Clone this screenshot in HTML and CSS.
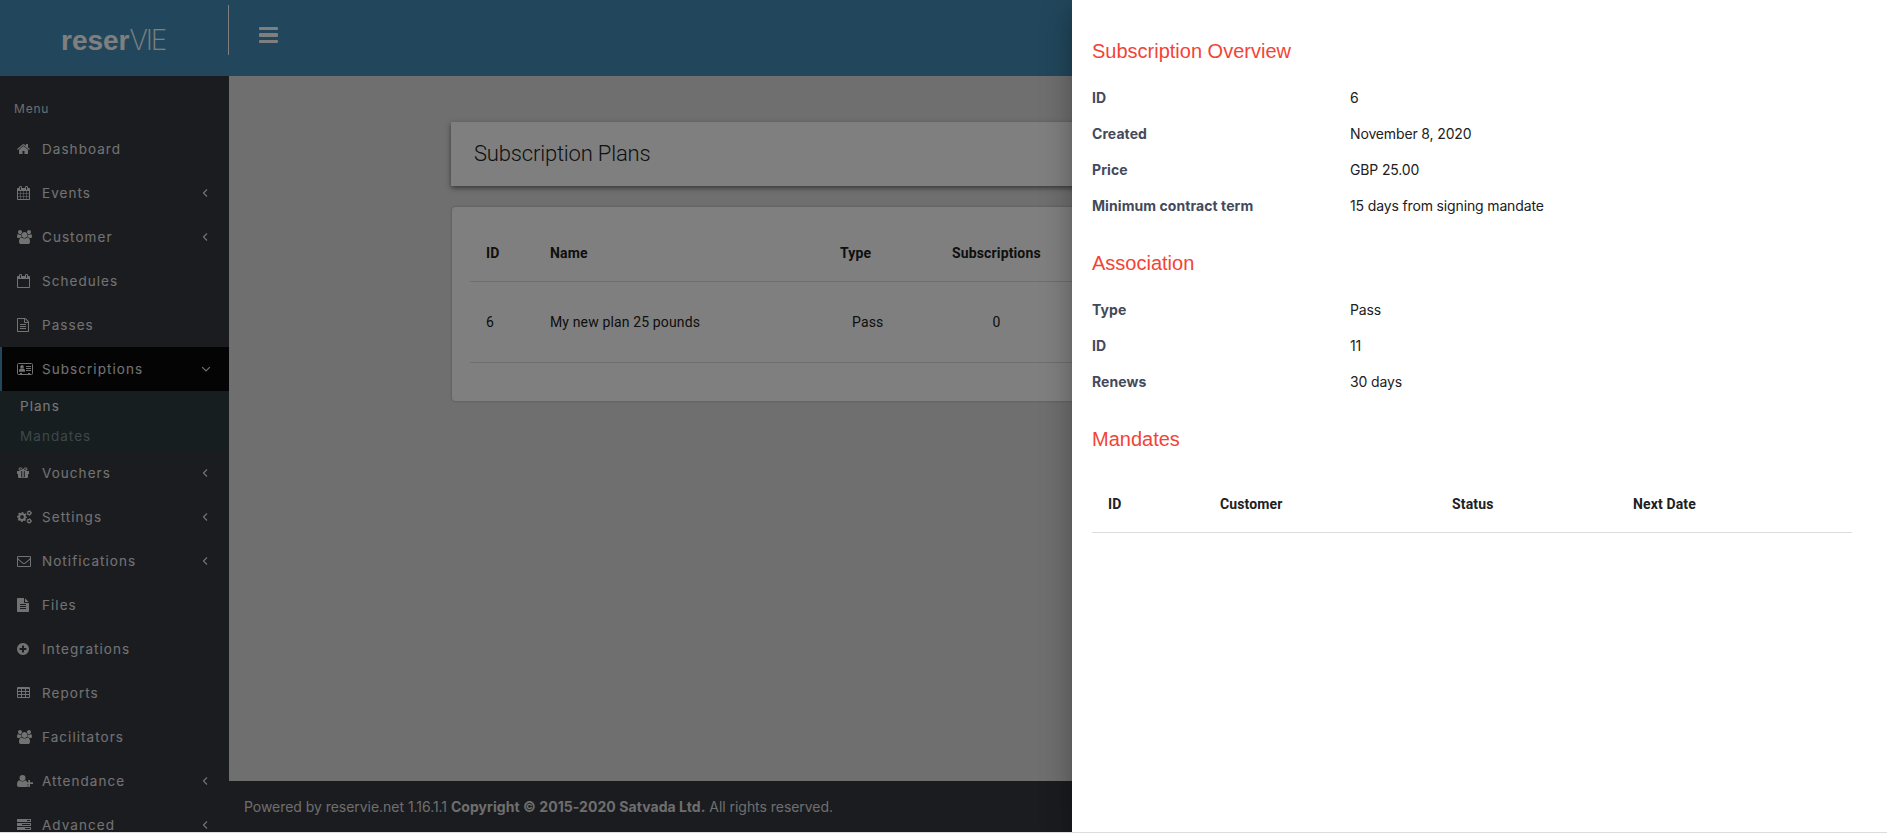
FILE: index.html
```
<!DOCTYPE html>
<html lang="en">
<head>
    <meta charset="UTF-8">
    <meta name="viewport" content="width=device-width, initial-scale=1.0">
    <title>reserVIE - Subscription Plans</title>
    <link rel="stylesheet" href="styles.css">
</head>
<body>
    <!-- icons used more than once -->
    <svg class="sprite">
        <symbol id="users" viewBox="64 0 1920 1792"><path d="M657 896q-162 5-265 128h-134q-82 0-138-40.5t-56-118.5q0-353 124-353 6 0 43.5 21t97.5 42.5 119 21.5q67 0 133-23-5 37-5 66 0 139 81 256zm1071 637q0 120-73 189.5t-194 69.5h-874q-121 0-194-69.5t-73-189.5q0-53 3.5-103.5t14-109 26.5-108.5 43-97.5 62-81 85.5-53.5 111.5-20q10 0 43 21.5t73 48 107 48 135 21.5 135-21.5 107-48 73-48 43-21.5q61 0 111.5 20t85.5 53.5 62 81 43 97.5 26.5 108.5 14 109 3.5 103.5zm-1024-1277q0 106-75 181t-181 75-181-75-75-181 75-181 181-75 181 75 75 181zm704 384q0 159-112.5 271.5t-271.5 112.5-271.5-112.5-112.5-271.5 112.5-271.5 271.5-112.5 271.5 112.5 112.5 271.5zm576 225q0 78-56 118.5t-138 40.5h-134q-103-123-265-128 81-117 81-256 0-29-5-66 66 23 133 23 59 0 119-21.5t97.5-42.5 43.5-21q124 0 124 353zm-128-609q0 106-75 181t-181 75-181-75-75-181 75-181 181-75 181 75 75 181z"/></symbol>
        <symbol id="left" viewBox="0 0 10 10"><path d="M6 1.5 2.5 5 6 8.5" fill="none" stroke="currentColor" stroke-width="1.2"/></symbol>
    </svg>

    <div class="app">
        <header class="header">
            <div class="logo"><b>reser</b><span>VIE</span></div>
            <div class="toggle"><i></i><i></i><i></i></div>
        </header>

        <div class="wrapper">
            <nav class="sidebar">
                <div class="menu-title">Menu</div>
                <a class="item">
                    <svg class="icon" width="13" height="14" viewBox="64 0 1664 1792"><path d="M1472 992v480q0 26-19 45t-45 19h-384v-384h-256v384h-384q-26 0-45-19t-19-45v-480q0-1 .5-3t.5-3l575-474 575 474q1 2 1 6zm223-69l-62 74q-8 9-21 11h-3q-13 0-21-7l-692-577-692 577q-12 8-24 7-13-2-21-11l-62-74q-8-10-7-23.5t11-21.5l719-599q32-26 76-26t76 26l244 204v-195q0-14 9-23t23-9h192q14 0 23 9t9 23v408l219 182q10 8 11 21.5t-7 23.5z"/></svg>
                    <span>Dashboard</span>
                </a>
                <a class="item">
                    <svg class="icon" width="13" height="14" viewBox="64 0 1664 1792"><path d="M192 1664h288v-288h-288v288zm352 0h320v-288h-320v288zm-352-352h288v-320h-288v320zm352 0h320v-320h-320v320zm-352-384h288v-288h-288v288zm736 736h320v-288h-320v288zm-384-736h320v-288h-320v288zm768 736h288v-288h-288v288zm-384-352h320v-320h-320v320zm-352-864v-288q0-13-9.5-22.5t-22.5-9.5h-64q-13 0-22.5 9.5t-9.5 22.5v288q0 13 9.5 22.5t22.5 9.5h64q13 0 22.5-9.5t9.5-22.5zm736 864h288v-320h-288v320zm-384-384h320v-288h-320v288zm384 0h288v-288h-288v288zm32-480v-288q0-13-9.5-22.5t-22.5-9.5h-64q-13 0-22.5 9.5t-9.5 22.5v288q0 13 9.5 22.5t22.5 9.5h64q13 0 22.5-9.5t9.5-22.5zm384-64v1280q0 52-38 90t-90 38h-1408q-52 0-90-38t-38-90v-1280q0-52 38-90t90-38h128v-96q0-66 47-113t113-47h64q66 0 113 47t47 113v96h384v-96q0-66 47-113t113-47h64q66 0 113 47t47 113v96h128q52 0 90 38t38 90z"/></svg>
                    <span>Events</span>
                    <svg class="arrow"><use href="#left"/></svg>
                </a>
                <a class="item">
                    <svg class="icon" width="15" height="14"><use href="#users"/></svg>
                    <span>Customer</span>
                    <svg class="arrow"><use href="#left"/></svg>
                </a>
                <a class="item">
                    <svg class="icon" width="13" height="14" viewBox="64 0 1664 1792"><path d="M192 1664h1408v-1024h-1408v1024zm384-1216v-288q0-14-9-23t-23-9h-64q-14 0-23 9t-9 23v288q0 14 9 23t23 9h64q14 0 23-9t9-23zm768 0v-288q0-14-9-23t-23-9h-64q-14 0-23 9t-9 23v288q0 14 9 23t23 9h64q14 0 23-9t9-23zm384-64v1280q0 52-38 90t-90 38h-1408q-52 0-90-38t-38-90v-1280q0-52 38-90t90-38h128v-96q0-66 47-113t113-47h64q66 0 113 47t47 113v96h384v-96q0-66 47-113t113-47h64q66 0 113 47t47 113v96h128q52 0 90 38t38 90z"/></svg>
                    <span>Schedules</span>
                </a>
                <a class="item">
                    <svg class="icon" width="12" height="14" viewBox="128 0 1536 1792"><path d="M1596 380q28 28 48 76t20 88v1152q0 40-28 68t-68 28h-1344q-40 0-68-28t-28-68v-1600q0-40 28-68t68-28h896q40 0 88 20t76 48zm-444-244v376h376q-10-29-22-41l-313-313q-12-12-41-22zm384 1528v-1024h-416q-40 0-68-28t-28-68v-416h-768v1536h1280zm-1024-864q0-14 9-23t23-9h704q14 0 23 9t9 23v64q0 14-9 23t-23 9h-704q-14 0-23-9t-9-23v-64zm736 224q14 0 23 9t9 23v64q0 14-9 23t-23 9h-704q-14 0-23-9t-9-23v-64q0-14 9-23t23-9h704zm0 256q14 0 23 9t9 23v64q0 14-9 23t-23 9h-704q-14 0-23-9t-9-23v-64q0-14 9-23t23-9h704z"/></svg>
                    <span>Passes</span>
                </a>
                <a class="item active">
                    <svg class="icon" width="16" height="12" viewBox="0 0 16 12">
                        <rect x=".5" y=".5" width="15" height="11" rx="1" fill="none" stroke="currentColor"/>
                        <circle cx="5" cy="3.9" r="1.8"/>
                        <path d="M2 8.8V7.6Q2 5.6 3.6 5.4Q5 6.4 6.4 5.4Q8 5.6 8 7.6V8.8zM9 3h5v1H9zM9 5h5v1H9zM9 7h5v1H9zM3 10h2v1H3zM11 10h2v1h-2z"/>
                    </svg>
                    <span>Subscriptions</span>
                    <svg class="arrow down" viewBox="0 0 10 10"><path d="M1.2 3.2 5 7 8.8 3.2" fill="none" stroke="currentColor" stroke-width="1.2"/></svg>
                </a>
                <div class="submenu">
                    <a class="current">Plans</a>
                    <a>Mandates</a>
                </div>
                <a class="item">
                    <svg class="icon" width="12" height="12" viewBox="0 0 12 12">
                        <path d="M0 4h4.2v3H0zM7.8 4H12v3H7.8zM1 7h3.2v4H2q-1 0-1-1zM7.800 7H11v3q0 1-1 1H7.800zM5.200 4h1.600v6H5.200zM4 10.200h4v.8H4z"/>
                        <path d="M6 3.600Q4.600.7 3.400.8 2 1 2.100 2.200 2.300 3.600 6 3.600 9.700 3.600 9.900 2.200 10 1 8.600.8 7.400.7 6 3.600z" fill="none" stroke="currentColor" stroke-width="1.1"/>
                    </svg>
                    <span>Vouchers</span>
                    <svg class="arrow"><use href="#left"/></svg>
                </a>
                <a class="item">
                    <svg class="icon" width="15" height="14" viewBox="0 0 15 14">
                        <g fill="none" stroke="currentColor">
                            <circle cx="5" cy="7" r="2.9" stroke-width="2"/>
                            <circle cx="5" cy="7" r="4.3" stroke-width="1.4" stroke-dasharray="1.7 1.677" stroke-dashoffset=".85"/>
                            <circle cx="12.2" cy="3" r="1.6" stroke-width="1.2"/>
                            <circle cx="12.2" cy="3" r="2.3" stroke-width=".8" stroke-dasharray="1.2 1.209"/>
                            <circle cx="12.2" cy="11" r="1.6" stroke-width="1.2"/>
                            <circle cx="12.2" cy="11" r="2.3" stroke-width=".8" stroke-dasharray="1.2 1.209"/>
                        </g>
                    </svg>
                    <span>Settings</span>
                    <svg class="arrow"><use href="#left"/></svg>
                </a>
                <a class="item">
                    <svg class="icon" width="14" height="14" viewBox="0 0 1792 1792"><path d="M1664 1504v-768q-32 36-69 66-268 206-426 338-51 43-83 67t-86.5 48.5-102.5 24.5h-2q-48 0-102.5-24.5t-86.5-48.5-83-67q-158-132-426-338-37-30-69-66v768q0 13 9.5 22.5t22.5 9.5h1472q13 0 22.5-9.5t9.5-22.5zm0-1051v-24.5l-.5-13-3-12.5-5.5-9-9-7.5-14-2.5h-1472q-13 0-22.5 9.5t-9.5 22.5q0 168 147 284 193 152 401 317 6 5 35 29.5t46 37.5 44.5 31.5 50.5 27.5 43 9h2q20 0 43-9t50.5-27.5 44.5-31.5 46-37.5 35-29.5q208-165 401-317 54-43 100.5-115.5t46.5-131.5zm128-37v1088q0 66-47 113t-113 47h-1472q-66 0-113-47t-47-113v-1088q0-66 47-113t113-47h1472q66 0 113 47t47 113z"/></svg>
                    <span>Notifications</span>
                    <svg class="arrow"><use href="#left"/></svg>
                </a>
                <a class="item">
                    <svg class="icon" width="12" height="14" viewBox="128 0 1536 1792"><path d="M1596 476q14 14 28 36h-472v-472q22 14 36 28zm-476 164h544v1056q0 40-28 68t-68 28h-1344q-40 0-68-28t-28-68v-1600q0-40 28-68t68-28h800v544q0 40 28 68t68 28zm160 736v-64q0-14-9-23t-23-9h-704q-14 0-23 9t-9 23v64q0 14 9 23t23 9h704q14 0 23-9t9-23zm0-256v-64q0-14-9-23t-23-9h-704q-14 0-23 9t-9 23v64q0 14 9 23t23 9h704q14 0 23-9t9-23zm0-256v-64q0-14-9-23t-23-9h-704q-14 0-23 9t-9 23v64q0 14 9 23t23 9h704q14 0 23-9t9-23z"/></svg>
                    <span>Files</span>
                </a>
                <a class="item">
                    <svg class="icon" width="12" height="14" viewBox="128 0 1536 1792"><path d="M1344 960v-128q0-26-19-45t-45-19h-256v-256q0-26-19-45t-45-19h-128q-26 0-45 19t-19 45v256h-256q-26 0-45 19t-19 45v128q0 26 19 45t45 19h256v256q0 26 19 45t45 19h128q26 0 45-19t19-45v-256h256q26 0 45-19t19-45zm320-64q0 209-103 385.5t-279.5 279.5-385.5 103-385.5-103-279.5-279.5-103-385.5 103-385.5 279.5-279.5 385.5-103 385.5 103 279.5 279.5 103 385.5z"/></svg>
                    <span>Integrations</span>
                </a>
                <a class="item">
                    <svg class="icon" width="13" height="12" viewBox="0 0 13 12"><path fill-rule="evenodd" d="M1 0h11q1 0 1 1v9q0 1-1 1H1q-1 0-1-1V1q0-1 1-1zM1 2v2h3V2zM5 2v2h3V2zM9 2v2h3V2zM1 5v2h3V5zM5 5v2h3V5zM9 5v2h3V5zM1 8v2h3V8zM5 8v2h3V8zM9 8v2h3V8z"/></svg>
                    <span>Reports</span>
                </a>
                <a class="item">
                    <svg class="icon" width="15" height="14"><use href="#users"/></svg>
                    <span>Facilitators</span>
                </a>
                <a class="item">
                    <svg class="icon" width="16" height="12" viewBox="0 0 16 12">
                        <circle cx="5.5" cy="3" r="3"/>
                        <path d="M2.5 5.2Q5.5 8 8.5 5.2q.8.2 1.200 1.300H10v3h1v1.300q-.3 1.200-1.300 1.200H2Q0 12 0 10 0 5.500 2.500 5.200zM11.200 5h1.800v2.200h3v1.800h-3v3h-1.800V9H9V7.200h2.200z"/>
                    </svg>
                    <span>Attendance</span>
                    <svg class="arrow"><use href="#left"/></svg>
                </a>
                <a class="item">
                    <svg class="icon" width="14" height="12" viewBox="0 0 14 12"><path fill-rule="evenodd" d="M0 0h14v3H0zM10 1v1h3V1zM0 4h14v3H0zM5 5v1h8V5zM0 8h14v3H0zM8 9v1h5V9z"/></svg>
                    <span>Advanced</span>
                    <svg class="arrow"><use href="#left"/></svg>
                </a>
            </nav>

            <div class="main">
                <main class="content">
                    <h1 class="page-title">Subscription Plans</h1>
                    <div class="card">
                        <div class="row head">
                            <span>ID</span>
                            <span>Name</span>
                            <span>Type</span>
                            <span>Subscriptions</span>
                        </div>
                        <div class="row">
                            <span>6</span>
                            <span>My new plan 25 pounds</span>
                            <span class="type">Pass</span>
                            <span class="count">0</span>
                        </div>
                    </div>
                </main>
                <footer class="footer">Powered by reservie.net 1.16.1.1 <b>Copyright © 2015-2020 Satvada Ltd.</b> All rights reserved.</footer>
            </div>
        </div>

        <div class="overlay"></div>
        <aside class="drawer">
            <h2>Subscription Overview</h2>
            <dl>
                <dt>ID</dt><dd>6</dd>
                <dt>Created</dt><dd>November 8, 2020</dd>
                <dt>Price</dt><dd>GBP 25.00</dd>
                <dt>Minimum contract term</dt><dd>15 days from signing mandate</dd>
            </dl>
            <h2>Association</h2>
            <dl>
                <dt>Type</dt><dd>Pass</dd>
                <dt>ID</dt><dd>11</dd>
                <dt>Renews</dt><dd>30 days</dd>
            </dl>
            <h2>Mandates</h2>
            <div class="mandates">
                <span>ID</span>
                <span>Customer</span>
                <span>Status</span>
                <span>Next Date</span>
            </div>
        </aside>
    </div>
</body>
</html>
```
FILE: styles.css
```
* {
    box-sizing: border-box;
}
body {
    margin: 0;
    background-color: #dcdcdc;
    font-family: Inter, sans-serif;
    font-size: 14px;
    overflow: hidden;
}
.sprite {
    display: none;
}
.app {
    position: relative;
    height: 832px;
    overflow: hidden;
}

/* header */
.header {
    display: flex;
    height: 76px;
    background-color: #448fb9;
    color: #fff;
}
.logo {
    width: 229px;
    height: 50px;
    margin-top: 5px;
    padding: 17px 0 0 61px;
    border-right: 1px solid #fff;
    font-family: "Liberation Sans", sans-serif;
    font-size: 28px;
    line-height: 36px;
    white-space: nowrap;
}
.logo span {
    font-family: Inter, sans-serif;
    font-weight: 200;
    letter-spacing: -2.2px;
}
.toggle {
    display: flex;
    flex-direction: column;
    gap: 3px;
    width: 19px;
    margin: 27px 0 0 30px;
}
.toggle i {
    height: 3.4px;
    border-radius: 1px;
    background-color: #fff;
}

/* sidebar */
.wrapper {
    display: flex;
    height: 756px;
}
.sidebar {
    width: 229px;
    flex-shrink: 0;
    background-color: #36383f;
    color: #e4e4e4;
    overflow: hidden;
}
.menu-title {
    height: 51px;
    padding: 23px 0 0 14px;
    font-size: 12px;
    line-height: 19px;
    letter-spacing: 0.8px;
    color: #dadada;
}
.item {
    display: flex;
    align-items: center;
    height: 44px;
    padding: 0 18px 0 15px;
    border-left: 2px solid transparent;
    font-size: 13.5px;
    letter-spacing: 1.05px;
}
.item span {
    flex: 1;
    margin-left: 10px;
}
.icon {
    fill: currentColor;
}
.icon[width="12"] {
    margin-right: 3px;
}
.icon[width="13"] {
    margin-right: 2px;
}
.icon[width="14"] {
    margin-right: 1px;
}
.icon[width="16"] {
    margin-right: -1px;
}
.arrow {
    width: 10px;
    height: 10px;
}
.active {
    background-color: #080808;
    border-left-color: #448fb9;
}
.submenu {
    height: 60px;
    background-color: #2c3c40;
}
.submenu a {
    display: block;
    padding-left: 20px;
    font-size: 13.5px;
    line-height: 30px;
    letter-spacing: 1.05px;
    color: #7b9096;
}
.submenu .current {
    color: #f0f0f0;
}

/* content */
.main {
    flex: 1;
    display: flex;
    flex-direction: column;
    background-color: #dedede;
}
.content {
    flex: 1;
    padding: 46px 222px 0;
    font-family: Roboto, sans-serif;
}
.page-title {
    height: 64px;
    margin: 0;
    padding-left: 23px;
    background-color: #fff;
    box-shadow: 0 2px 5px rgba(0, 0, 0, 0.5);
    font-size: 22px;
    font-weight: 300;
    line-height: 63px;
    letter-spacing: -0.18px;
    color: #222;
}
.card {
    height: 194px;
    margin: 21px 1px 0;
    padding: 18px;
    background-color: #fff;
    border-radius: 4px;
    box-shadow: 0 0 2px 1px rgba(0, 0, 0, 0.12);
}
.row {
    display: grid;
    grid-template-columns: 64px 290px 112px 89px;
    height: 81px;
    padding-left: 16px;
    border-bottom: 1px solid #dcdcdc;
    line-height: 80px;
    letter-spacing: 0.14px;
    color: #212121;
}
.row.head {
    height: 57px;
    line-height: 57px;
    font-weight: 700;
}
.type {
    padding-left: 12px;
}
.count {
    text-align: center;
}
.footer {
    height: 51px;
    padding-left: 15px;
    background-color: #36383f;
    color: #dcdcdc;
    line-height: 52px;
    letter-spacing: -0.04px;
}
.footer b {
    letter-spacing: 0.06px;
}

/* drawer */
.overlay {
    position: absolute;
    inset: 0;
    background-color: rgba(0, 0, 0, 0.5);
}
.drawer {
    position: absolute;
    top: 0;
    right: 0;
    width: 815px;
    height: 100%;
    padding: 36px 35px 0 20px;
    background-color: #fff;
    box-shadow: 0 8px 10px -5px rgba(0, 0, 0, 0.2), 0 16px 24px 2px rgba(0, 0, 0, 0.14), 0 6px 30px 5px rgba(0, 0, 0, 0.12);
}
.drawer h2 {
    margin: 0;
    font-family: "Liberation Sans", sans-serif;
    font-size: 20px;
    font-weight: 400;
    line-height: 30px;
    color: #f44336;
}
.drawer dl {
    display: grid;
    grid-template-columns: 258px 1fr;
    margin: 14px 0 24px;
    line-height: 36px;
}
.drawer dt {
    font-weight: 700;
    letter-spacing: 0.07px;
    color: #434a5b;
}
.drawer dd {
    margin: 0;
    letter-spacing: -0.14px;
    color: #212121;
}
.mandates {
    display: grid;
    grid-template-columns: 112px 232px 181px 1fr;
    height: 57px;
    margin-top: 22px;
    padding-left: 16px;
    border-bottom: 1px solid #dcdcdc;
    font-family: Roboto, sans-serif;
    font-weight: 700;
    line-height: 57px;
    letter-spacing: 0.14px;
    color: #212121;
}
```
